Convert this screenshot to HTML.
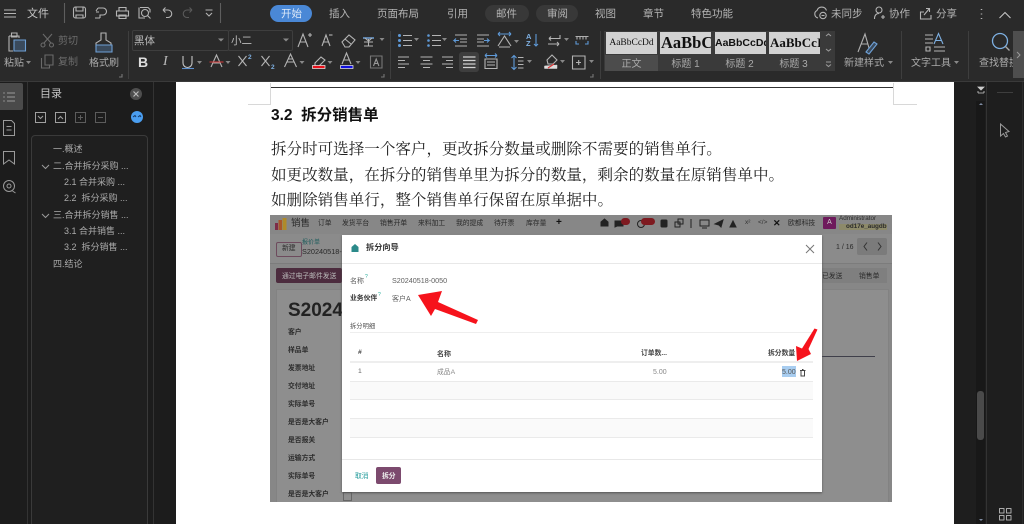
<!DOCTYPE html>
<html lang="zh-CN"><head><meta charset="utf-8"><style>
html,body{margin:0;padding:0;width:1024px;height:524px;overflow:hidden;background:#1e1e1e}
body{position:relative;font-family:"Liberation Sans","Noto Sans CJK SC",sans-serif;color:#c4c4c4;filter:blur(.3px)}
.t{position:absolute;white-space:nowrap;line-height:1}
.b{position:absolute}
svg{position:absolute;overflow:visible}
.tab{font-size:10.5px;color:#b4b4b4;top:9px}
.rb{font-size:10px;color:#aaa}
.toc{font-size:9px;color:#ababab}
.st{position:absolute;top:32px;width:51px;height:22px;background:#d2d2d2;overflow:hidden;color:#111;text-align:center;line-height:22px;white-space:nowrap}
.sl{position:absolute;top:55px;width:53px;height:16px;font-size:10px;color:#aaa;text-align:center;line-height:19.5px}
.p{font-family:"Liberation Serif","Noto Serif CJK SC",serif;font-size:15.55px;color:#222;left:271px}
#shot{position:absolute;left:270px;top:215px;width:622px;height:287px;background:#878787;overflow:hidden;filter:blur(.35px)}
#shot .t{color:#2a2a2a;font-size:6.8px}
#shot .g{color:#2c2c2c;left:18px;font-weight:600}
#shot .m{color:#5f5f5f;font-size:7px}
</style></head><body>
<div class="b" style="left:0;top:0;width:1024px;height:81px;background:#2a2a2a"></div>
<div class="b" style="left:0;top:81px;width:1024px;height:1px;background:#3a3a3a"></div>
<div class="b" style="left:270px;top:5px;width:42px;height:17px;border-radius:9px;background:#4a88d6"></div>
<div class="b" style="left:485px;top:5px;width:44px;height:17px;border-radius:9px;background:#383838"></div>
<div class="b" style="left:536px;top:5px;width:42px;height:17px;border-radius:9px;background:#383838"></div>
<div class="b" style="left:604px;top:31px;width:231px;height:40px;background:#3a3a3a"></div>
<div class="b" style="left:459px;top:52px;width:20px;height:20px;background:#3e3e3e;border-radius:3px"></div>

<span class="t" style="left:27px;top:8.5px;font-size:11px">文件</span>
<span class="t tab" style="left:281px;color:#dbe8f8">开始</span>
<span class="t tab" style="left:329px">插入</span>
<span class="t tab" style="left:377px">页面布局</span>
<span class="t tab" style="left:447px">引用</span>
<span class="t tab" style="left:496px">邮件</span>
<span class="t tab" style="left:547px">审阅</span>
<span class="t tab" style="left:595px">视图</span>
<span class="t tab" style="left:643px">章节</span>
<span class="t tab" style="left:691px">特色功能</span>
<span class="t tab" style="left:831px">未同步</span>
<span class="t tab" style="left:889px">协作</span>
<span class="t tab" style="left:936px">分享</span>

<svg width="1024" height="81" style="left:0;top:0" fill="none" stroke="#b4b4b4" stroke-width="1.1">
<path d="M4 10h12M4 13.500h12M4 17h12"/>
<path d="M64.500 3v20M220.500 3v20" stroke="#5e5e5e"/>
<path d="M73.500 9a2 2 0 0 1 2-2h8a2 2 0 0 1 2 2v7a2 2 0 0 1-2 2h-8a2 2 0 0 1-2-2zM76 7v4h7V7M76 18v-3h7v3"/>
<path d="M98 8h5a3.500 3.500 0 0 1 0 7h-3v3M96 11l2-3M96 12h3M95 18h5"/>
<path d="M119 11V7.500h7V11M116.500 11h12v5h-12zM119 15h7v3.500h-7z"/>
<path d="M140 7.500h8l2 2v3M139 7.500v10.500h6"/><circle cx="145" cy="13" r="3.500"/><path d="M147.500 15.500l3 3"/>
<path d="M163 10h5a3.700 3.700 0 0 1 0 7.500h-2M163 10l2.500-2.500M163 10l2.500 2.500"/>
<path d="M192 10h-5a3.700 3.700 0 0 0 0 7.500h2M192 10l-2.500-2.500M192 10l-2.500 2.500" stroke="#5a5a5a"/>
<path d="M205.500 10h7M206 13l3 3 3-3"/>
<path d="M818 18a4 4 0 0 1-1-7.500 5 5 0 0 1 9.500 0"/><circle cx="823" cy="15.500" r="3.200"/><path d="M821.500 15.500h3"/>
<circle cx="879" cy="10" r="3"/><path d="M874.500 19c0-4 2-5.500 4.500-5.500M881 17h4M883 15v4"/>
<path d="M924 12h-3.500v7h10.500v-4M924 15l5-6M926 8.500h3.500v3.500"/>
<path d="M981.500 9v1M981.500 13.500v1M981.500 18v1" stroke-width="1.500"/>
<path d="M999.500 18l5.500-5.500 5.500 5.500" stroke="#c4c4c4"/>

<path d="M128.500 31v48M390.500 31v48M600.500 31v48M901.500 31v48M968.500 31v48" stroke="#3e3e3e"/>
<path d="M119 77h3v-3M381 77h3v-3M590 77h3v-3" stroke="#777"/>

<!-- clipboard -->
<path d="M9 36h10v2M9 36v15h4M11.500 33h5.500v4h-5.500z"/><path d="M14 40h11.500v11H14z" stroke="#6ea0d6" fill="#3a4a5c"/>
<!-- cut / copy -->
<path d="M43 34l8 9M52 34l-8 9" stroke="#6a6a6a"/><circle cx="43" cy="45" r="2" stroke="#6a6a6a"/><circle cx="51.500" cy="45" r="2" stroke="#6a6a6a"/>
<path d="M45 55h8v10h-8zM41.500 58v10h8v-3" stroke="#6a6a6a"/>
<!-- brush -->
<path d="M101 33h5v7l5 3v3H96v-3l5-3z"/><path d="M96 45h16v7H96z" stroke="#6ea0d6" fill="#3a4a5c"/>
<!-- font row 1 -->
<path d="M298 47l5-13 5 13M300 42h6"/><path d="M308 35h4M310 33v4"/>
<path d="M322 46l4-11 4 11M323.500 42h5"/><path d="M329 35h3.500"/>
<path d="M342 42l7-7 6 5-6 7h-4z"/><path d="M345 39l6 5"/>
<path d="M363 38h11" stroke="#6ea0d6" stroke-width="1.500"/><path d="M364 42h9M368.500 39v7M365 38l3.500 3 3.500-3M364 46h9"/>
<!-- font row 2 -->
<path d="M183 56v7a4.500 4.500 0 0 0 9 0v-7" stroke="#c6c6c6"/><path d="M182 68.500h12" stroke="#5c8fcc"/>
<path d="M211 67l5.500-12 5.500 12M213 63h7"/><path d="M209.500 62h14" stroke="#c93a3a"/>
<path d="M238.500 56l8 10M246.500 56l-8 10M261.500 56l8 10M269.500 56l-8 10"/>
<path d="M284.500 67l6-13 6 13M287 62h7M288 59h5"/>
<path d="M315 63l6-6 4 3-6 6h-4z"/><rect x="312.500" y="65.500" width="12.500" height="3" fill="#e8101a" stroke="#eee" stroke-width=".7"/>
<path d="M342 64l4.500-11 4.500 11M344 60h5"/><rect x="340.500" y="65.500" width="12.500" height="3" fill="#1010e0" stroke="#eee" stroke-width=".7"/>
<path d="M370.500 56h11.500v12h-11.500z" stroke="#777"/><path d="M373.500 66l2.700-7 2.700 7M374.500 63.500h3.500" stroke="#999"/>
<!-- lists -->
<path d="M403 35.500h9M403 40.500h9M403 45.500h9M432 35.500h9M432 40.500h9M432 45.500h9"/>
<g fill="#5f9ad8" stroke="none"><circle cx="399.500" cy="35.500" r="1.500"/><circle cx="399.500" cy="40.500" r="1.500"/><circle cx="399.500" cy="45.500" r="1.500"/><circle cx="428.500" cy="35.500" r="1.300"/><circle cx="428.500" cy="40.500" r="1.300"/><circle cx="428.500" cy="45.500" r="1.300"/></g>
<path d="M455 35h12M460 39h7M460 42h7M455 46h12M477 35h12M477 39h7M477 42h7M477 46h12" stroke="#b0b0b0"/>
<path d="M459 40.500h-5l2-2M454 40.500l2 2M484 40.500h5l-2-2M489 40.500l-2 2" stroke="#5f9ad8"/>
<path d="M498 46l6.500-10 6.500 10M499 47h11"/><path d="M498 34h13M498 34l2-2M498 34l2 2M511 34l-2-2M511 34l-2 2" stroke="#5f9ad8"/>
<path d="M536 34v12M534 44l2 2 2-2" stroke="#5f9ad8"/>
<path d="M560 35v3.500h-11M549 38.500l2-2M549 38.500l2 2M548 44h11M559 44l-2-2M559 44l-2 2"/>
<path d="M575.500 36.500h13M577 36.500v3M580 36.500v3M583 36.500v3M586 36.500v3" stroke="#b0b0b0"/><path d="M576 41v3h3M585 44h3v-3" stroke="#5f9ad8"/>
<path d="M398 57h11M398 60.500h7M398 64h11M398 67.500h7M420.500 57h12M423 60.500h7M420.500 64h12M423 67.500h7M442 57h11M446 60.500h7M442 64h11M446 67.500h7"/>
<path d="M463 57h12.500M463 60.500h12.500M463 64h12.500M463 67.500h12.500" stroke="#d0d0d0" stroke-width="1.300"/>
<path d="M485 59h12v9.500h-12zM487 62h8M487 65h8"/><path d="M485 55.500h12M485 55.500l2-2M485 55.500l2 2M497 55.500l-2-2M497 55.500l-2 2" stroke="#5f9ad8"/>
<path d="M514 56v13M511.500 58l2.500-2.500 2.500 2.500M511.500 67l2.500 2.500 2.500-2.500" stroke="#5f9ad8"/>
<path d="M518 57.500h5.500M518 61h5.500M518 64.500h5.500M518 68h5.500"/>
<path d="M547 60l5-5 5 5-4 4h-5z"/><path d="M544.500 66l12.500-1v3.500h-12.500z" fill="#ddd" stroke="#ddd" stroke-width=".5"/><path d="M548 68l6-4" stroke="#d33"/>
<path d="M572.500 56h12.500v13h-12.500zM578.700 60v5M576 62.500h5"/>
<!-- dropdown arrows -->
<g fill="#888" stroke="none"><path d="M26 61h5l-2.500 3zM197 61h5l-2.500 3zM225.500 61h5l-2.500 3zM299.500 61h5l-2.500 3zM327.500 61h5l-2.500 3zM355.500 61h5l-2.500 3zM414 38h5l-2.500 3zM442 38h5l-2.500 3zM514 40h5l-2.500 3zM564 38h5l-2.500 3zM527 60h5l-2.500 3zM560 60h5l-2.500 3zM589 60h5l-2.500 3zM379.500 38h5l-2.500 3zM218 38.500h6l-3 3zM283 38.500h6l-3 3zM888 61h5l-2.500 3zM954 61h5l-2.500 3z"/></g>
<!-- style scroll -->
<path d="M826 36l2.500-2 2.500 2M826 49l2.500 2 2.500-2M826 62h5M826 64.500l2.500 2 2.500-2" stroke="#999"/>
<!-- new style / tools / search -->
<path d="M858 52l7-18 4 14M861 44h7" stroke="#b0b0b0"/><path d="M866 52l8-10 3 2-8 10z" stroke="#6ea0d6" fill="#3a4a5c"/>
<path d="M925 35h8M925 39h8M925 43h8M926 47h4v4h-4zM934 47h11M934 51h11"/><path d="M934 44l4.500-10.500 4.500 10.500M936 40.500h5" stroke="#7eb0e2"/>
<circle cx="1000" cy="41" r="7.500" stroke="#7eb0e2" stroke-width="1.300"/><path d="M1005.500 46.500l4 4" stroke="#aaa" stroke-width="1.300"/>
</svg>

<span class="t rb" style="left:4px;top:58.5px">粘贴</span>
<span class="t rb" style="left:58px;top:37px;color:#6c6c6c">剪切</span>
<span class="t rb" style="left:58px;top:58px;color:#6c6c6c">复制</span>
<span class="t rb" style="left:89px;top:58.5px">格式刷</span>

<div class="b" style="left:132px;top:30px;width:95px;height:19px;border:1px solid #3e3e3e;border-radius:2px"></div>
<div class="b" style="left:228px;top:30px;width:63px;height:19px;border:1px solid #3e3e3e;border-radius:2px"></div>
<span class="t rb" style="left:134px;top:36px;color:#bbb;font-size:10.5px">黑体</span>
<span class="t rb" style="left:231px;top:36px;color:#bbb;font-size:10.5px">小二</span>

<span class="t" style="left:138px;top:55px;font-size:14px;font-weight:700;color:#ddd">B</span>
<span class="t" style="left:163px;top:55px;font-size:14px;font-style:italic;font-family:'Liberation Serif',serif;color:#bbb">I</span>
<span class="t" style="left:248px;top:55px;font-size:6.5px;font-weight:700;color:#7eb0e2">2</span>
<span class="t" style="left:271px;top:65px;font-size:6.5px;font-weight:700;color:#7eb0e2">2</span>
<span class="t" style="left:526px;top:33px;font-size:7.5px;font-weight:700;color:#7eb0e2;line-height:7px;white-space:normal;width:8px">A<br>Z</span>

<!-- styles -->
<div class="st" style="left:606px;font:9.5px/22px 'Liberation Serif',serif">AaBbCcDd</div>
<div class="st" style="left:660px;font:700 16.5px/22px 'Liberation Serif',serif;text-align:left;text-indent:1px">AaBbC</div>
<div class="st" style="left:715px;font:700 10.5px/22px 'Liberation Sans',sans-serif;text-align:left">AaBbCcDd</div>
<div class="st" style="left:769px;font:700 13px/22px 'Liberation Serif',serif;text-align:left;text-indent:1px">AaBbCcI</div>
<div class="sl" style="left:605px;background:#4c4c4c">正文</div>
<div class="sl" style="left:659px">标题 1</div>
<div class="sl" style="left:713px">标题 2</div>
<div class="sl" style="left:767px">标题 3</div>
<span class="t rb" style="left:844px;top:58.5px">新建样式</span>
<span class="t rb" style="left:911px;top:58.5px">文字工具</span>
<span class="t rb" style="left:979px;top:58.5px">查找替换</span>
<div class="b" style="left:1013px;top:31px;width:11px;height:47px;background:#4e4e4e"></div>
<svg width="5" height="8" style="left:1016px;top:51px"><path d="M1 1l3 3-3 3" stroke="#999" fill="none"/></svg>

<!-- left area -->
<div class="b" style="left:0;top:82px;width:176px;height:442px;background:#1c1c1c"></div>
<div class="b" style="left:27px;top:82px;width:1px;height:442px;background:#333"></div>
<div class="b" style="left:153px;top:82px;width:1px;height:442px;background:#333"></div>
<div class="b" style="left:0;top:83px;width:23px;height:27px;background:#4a4a4a;border-radius:0 2px 2px 0"></div>
<svg width="30" height="120" style="left:0;top:82px" fill="none" stroke="#9a9a9a">
<path d="M7 11h8M7 15h8M7 19h8"/><path d="M3 11h2M3 15h2M3 19h2" stroke="#8a8a8a"/>
<path d="M3.500 38.500h8l3 3v12h-11zM6.500 44.500h5M6.500 48h5"/><path d="M3.500 69.500h11v12.500l-5.500-4-5.500 4z"/>
<circle cx="9" cy="104" r="5.500"/><circle cx="9" cy="104" r="2"/><path d="M12.500 109l3 2"/>
</svg>
<span class="t" style="left:40px;top:89px;font-size:11px;color:#c6c6c6">目录</span>
<div class="b" style="left:130px;top:88px;width:12px;height:12px;border-radius:6px;background:#4e4e4e"></div>
<svg width="8" height="8" style="left:132px;top:90px"><path d="M1.500 1.500l5 5M6.500 1.500l-5 5" stroke="#bbb" stroke-width="1.200"/></svg>
<svg width="110" height="14" style="left:35px;top:112px" fill="none" stroke="#a0a0a0">
<path d="M.5.500h10v10H.5zM3 4l2.500 2.500L8 4M20.500.500h10v10h-10zM23 7l2.500-2.500L28 7"/>
<path d="M40.500.500h10v10h-10zM45.500 3v5M43 5.500h5M60.500.500h10v10h-10zM63 5.500h5" stroke="#5c5c5c"/></svg>
<div class="b" style="left:131px;top:111px;width:12px;height:12px;border-radius:6px;background:#4a9ef0"></div>
<svg width="12" height="5" style="left:131px;top:114px"><path d="M2 3l2-1.500 1 1.500M7 3l2-1.500 1 1.500" stroke="#173a66" fill="none"/></svg>
<div class="b" style="left:31px;top:135px;width:115px;height:400px;border:1px solid #3a3a3a;border-radius:4px;background:#1f1f1f"></div>
<span class="t toc" style="left:53px;top:144.5px">一.概述</span>
<span class="t toc" style="left:53px;top:161.5px">二.合并拆分采购 ...</span>
<span class="t toc" style="left:64px;top:177.5px">2.1 合并采购 ...</span>
<span class="t toc" style="left:64px;top:194px">2.2&nbsp; 拆分采购 ...</span>
<span class="t toc" style="left:53px;top:210.5px">三.合并拆分销售 ...</span>
<span class="t toc" style="left:64px;top:227px">3.1 合并销售 ...</span>
<span class="t toc" style="left:64px;top:243px">3.2&nbsp; 拆分销售 ...</span>
<span class="t toc" style="left:53px;top:259.5px">四.结论</span>
<svg width="10" height="60" style="left:41px;top:163px" fill="none" stroke="#9a9a9a"><path d="M1 2l3.500 3.500L8 2M1 51l3.500 3.500L8 51"/></svg>

<!-- right dark -->
<div class="b" style="left:954px;top:82px;width:70px;height:442px;background:#1e1e1e"></div>
<div class="b" style="left:976px;top:101px;width:9px;height:423px;background:#181818"></div>
<div class="b" style="left:986px;top:82px;width:1px;height:442px;background:#333"></div>
<div class="b" style="left:1022px;top:82px;width:1px;height:442px;background:#2c2c2c"></div>
<div class="b" style="left:977px;top:391px;width:7px;height:49px;border-radius:3px;background:#4a4a4a"></div>
<svg width="50" height="442" style="left:974px;top:82px">
<path d="M4 5h6L7 8zM4 11h6M4 9v2M10 9v2" stroke="#ccc" fill="#ccc" stroke-width=".8"/>
<path d="M5 23l2-2 2 2z" fill="#7f8ca3"/><path d="M5 437l2 2 2-2z" fill="#7f8ca3"/>
<path d="M23 10.500h16" stroke="#3e3e3e"/>
<path d="M26.500 42l0 12 3-2.500 2 3.500 2-1-2-3.500 3.500-1z" fill="none" stroke="#9a9a9a"/>
<path d="M25.500 426.500h4.500v4.500h-4.500zM32.500 426.500h4.500v4.500h-4.500zM25.500 433.500h4.500v4.500h-4.500zM32.500 433.500h4.500v4.500h-4.500z" fill="none" stroke="#aaa" stroke-linejoin="round"/>
</svg>

<!-- page -->
<div class="b" style="left:176px;top:82px;width:778px;height:442px;background:#fff"></div>
<div class="b" style="left:271px;top:87px;width:623px;height:1px;background:#333"></div>
<svg width="780" height="30" style="left:176px;top:82px" fill="none" stroke="#d8d8d8"><path d="M94.500 1v21.500H72M717.500 1v21.500H741"/></svg>
<span class="t" style="left:271px;top:108px;font-size:15.5px;font-weight:700;color:#111">3.2&nbsp; 拆分销售单</span>
<span class="t p" style="top:142px">拆分时可选择一个客户，更改拆分数量或删除不需要的销售单行。</span>
<span class="t p" style="top:167.5px">如更改数量，在拆分的销售单里为拆分的数量，剩余的数量在原销售单中。</span>
<span class="t p" style="top:193px">如删除销售单行，整个销售单行保留在原单据中。</span>

<!-- screenshot -->
<div id="shot">
<div class="b" style="left:0;top:19px;width:622px;height:29px;background:#8b8b8b;border-bottom:1px solid #7c7c7c"></div>
<div class="b" style="left:6px;top:74px;width:611px;height:220px;background:#8e8e8e;border:1px solid #828282"></div>
<svg width="14" height="12" style="left:5px;top:2.5px"><rect x="0" y="5" width="3" height="7" fill="#7d2c48"/><rect x="3.500" y="2" width="3.500" height="10" fill="#a8552b"/><rect x="7.500" y="0" width="4" height="12" fill="#b08a28"/></svg>
<span class="t" style="left:21px;top:3.5px;font-size:9.5px">销售</span>
<span class="t" style="left:48px;top:6px">订单</span>
<span class="t" style="left:72px;top:6px">发货平台</span>
<span class="t" style="left:110px;top:6px">销售开单</span>
<span class="t" style="left:148px;top:6px">来料加工</span>
<span class="t" style="left:186px;top:6px">我的提成</span>
<span class="t" style="left:224px;top:6px">待开票</span>
<span class="t" style="left:256px;top:6px">库存量</span>
<span class="t" style="left:286px;top:3px;font-size:10px;font-weight:700;color:#111">+</span>
<div class="b" style="left:6px;top:27px;width:24px;height:13px;border:1px solid #6d4b5d;border-radius:2px"></div>
<span class="t" style="left:12px;top:31px">新建</span>
<span class="t" style="left:32px;top:24.5px;font-size:6px;color:#1d5c5c">报价单</span>
<span class="t" style="left:32px;top:33px;font-size:7.3px">S20240518-</span>
<div class="b" style="left:6px;top:53px;width:66px;height:15px;background:#4c2c3e;border-radius:2px"></div>
<span class="t" style="left:12px;top:58.5px;color:#bbb">通过电子邮件发送</span>
<span class="t" style="left:18px;top:85.5px;font-size:19px;font-weight:700;color:#222">S20240</span>
<span class="t g" style="top:114.5px">客户</span>
<span class="t g" style="top:132.5px">样品单</span>
<span class="t g" style="top:150.5px">发票地址</span>
<span class="t g" style="top:168.5px">交付地址</span>
<span class="t g" style="top:186.5px">实际单号</span>
<span class="t g" style="top:204.5px">是否是大客户</span>
<span class="t g" style="top:222.5px">是否报关</span>
<span class="t g" style="top:240.5px">运输方式</span>
<span class="t g" style="top:258.5px">实际单号</span>
<span class="t g" style="top:276.5px">是否是大客户</span>
<div class="b" style="left:73px;top:277px;width:7px;height:7px;border:1px solid #666"></div>
<!-- top right icons -->
<svg width="200" height="16" style="left:330px;top:1px"><g fill="none" stroke="#222" stroke-width="1">
<path d="M4 3l3.500 3v4h-7V6z" fill="#222" transform="translate(.5 0)"/>
<path d="M15 5h8v5h-6l-2 1z" fill="#222"/><circle cx="41" cy="8" r="3.500"/>
<rect x="61" y="4" width="6" height="7" rx="1" fill="#222"/>
<path d="M78 3h5v5h-5zM75 6h5v5h-5z"/><path d="M91 3v9"/>
<path d="M100 4h9v6h-9zM102 12h5"/><path d="M115 8l8-4-2 7-2-2z" fill="#222"/><path d="M130 11l3-6 3 6z" fill="#222"/>
</g></svg>
<div class="b" style="left:351px;top:3px;width:9px;height:7px;border-radius:4px;background:#7e1a20"></div>
<div class="b" style="left:371px;top:3px;width:14px;height:7px;border-radius:4px;background:#7e1a20"></div>
<span class="t" style="left:475px;top:5px;font-size:6.5px;color:#333">x²</span>
<span class="t" style="left:488px;top:5px;font-size:6.5px;color:#333">&lt;/&gt;</span>
<span class="t" style="left:503px;top:3.5px;font-size:9px;font-weight:700;color:#111">✕</span>
<span class="t" style="left:518px;top:5.5px">欧都科技</span>
<div class="b" style="left:553px;top:2px;width:13px;height:12px;background:#6e1a5c;border-radius:1px;color:#ccc;font-size:7px;line-height:12px;text-align:center">A</div>
<span class="t" style="left:569px;top:1px;font-size:6.3px">Administrator</span>
<span class="t" style="left:569px;top:9px;font-size:6.3px;font-weight:600;background:#8d8a6a;padding-left:7px">od17e_augdb</span>
<span class="t" style="left:566px;top:28.5px;font-size:7px">1 / 16</span>
<div class="b" style="left:587px;top:23px;width:30px;height:17px;background:#7b7b7b;border-radius:2px"></div>
<svg width="30" height="17" style="left:587px;top:23px" fill="none" stroke="#333"><path d="M10 4.500l-3 4 3 4M21 4.500l3 4-3 4"/></svg>
<div class="b" style="left:552px;top:53px;width:65px;height:15px;background:#7f7f7f"></div>
<span class="t" style="left:552px;top:58.5px">已发送</span>
<span class="t" style="left:589px;top:58.5px">销售单</span>
<div class="b" style="left:552px;top:141px;width:53px;height:1px;background:#3f3f4a"></div>
<!-- modal -->
<div class="b" style="left:72px;top:19.5px;width:480px;height:257px;background:#fff;box-shadow:0 1px 2px #555"></div>
<div class="b" style="left:72px;top:48px;width:480px;height:1px;background:#e8e8e8"></div>
<svg width="8" height="8" style="left:81px;top:29px"><path d="M4 0l3.500 3V8h-7V3z" fill="#2b8a8a"/></svg>
<span class="t" style="left:96px;top:29px;font-size:8.2px;font-weight:600;color:#333">拆分向导</span>
<svg width="10" height="10" style="left:535px;top:29px"><path d="M1 1l8 8M9 1l-8 8" stroke="#777"/></svg>
<span class="t m" style="left:80px;top:62.5px">名称</span><span class="t" style="left:95px;top:60px;font-size:5px;color:#2a9">?</span>
<span class="t m" style="left:122px;top:62px;font-size:7.2px">S20240518-0050</span>
<span class="t" style="left:80px;top:81px;font-weight:700;color:#333">业务伙伴</span><span class="t" style="left:108px;top:77.5px;font-size:5px;color:#2a9">?</span>
<span class="t m" style="left:122px;top:81px">客户A</span>
<span class="t" style="left:80px;top:108.5px;font-size:6.3px;color:#555">拆分明细</span>
<div class="b" style="left:80px;top:117px;width:463px;height:1px;background:#eee"></div>
<span class="t" style="left:88px;top:135px;font-weight:700;color:#444">#</span>
<span class="t" style="left:167px;top:135.5px;font-size:7px;font-weight:600;color:#444">名称</span>
<span class="t" style="left:371px;top:135.5px;font-weight:600;color:#444">订单数...</span>
<span class="t" style="left:498px;top:135.5px;font-weight:600;color:#444">拆分数量</span>
<div class="b" style="left:80px;top:146px;width:463px;height:2px;background:#eee"></div>
<span class="t" style="left:88px;top:154px;color:#666">1</span>
<span class="t" style="left:167px;top:154.5px;color:#888">成品A</span>
<span class="t" style="left:383px;top:154px;font-size:7px;color:#888">5.00</span>
<div class="b" style="left:512px;top:151px;width:14px;height:11px;background:#a8cdf0"></div>
<span class="t" style="left:512px;top:153.5px;font-size:7px;color:#555">5.00</span>
<svg width="7" height="8" style="left:530px;top:153.5px" fill="none" stroke="#444"><path d="M0 1.500h5.500M1 2v5h3.500V2M2 .5h1.500"/></svg>
<div class="b" style="left:80px;top:166px;width:463px;height:1px;background:#eaeaea"></div>
<div class="b" style="left:80px;top:167px;width:463px;height:17px;background:#fafafa"></div>
<div class="b" style="left:80px;top:184px;width:463px;height:1px;background:#eaeaea"></div>
<div class="b" style="left:80px;top:203px;width:463px;height:1px;background:#eaeaea"></div>
<div class="b" style="left:80px;top:204px;width:463px;height:18px;background:#fafafa"></div>
<div class="b" style="left:80px;top:222px;width:463px;height:1px;background:#eaeaea"></div>
<div class="b" style="left:72px;top:244px;width:480px;height:1px;background:#e8e8e8"></div>
<span class="t" style="left:85px;top:258.5px;color:#1f9a9a">取消</span>
<div class="b" style="left:106px;top:252px;width:25px;height:17px;background:#7c4a6e;border-radius:2px"></div>
<span class="t" style="left:112px;top:258.5px;font-weight:600;color:#eee">拆分</span>
<!-- arrows -->
<svg width="622" height="287" style="left:0;top:0">
<path d="M148 80L172 76 168 87 208 105 206 109 165 94 161 101z" fill="#f6131c"/>
<path d="M544.500 113.500L547.500 114.500 538.500 134 541 139 527 146 526 131 532 133.500z" fill="#f6131c"/>
</svg>
</div>
</body></html>
